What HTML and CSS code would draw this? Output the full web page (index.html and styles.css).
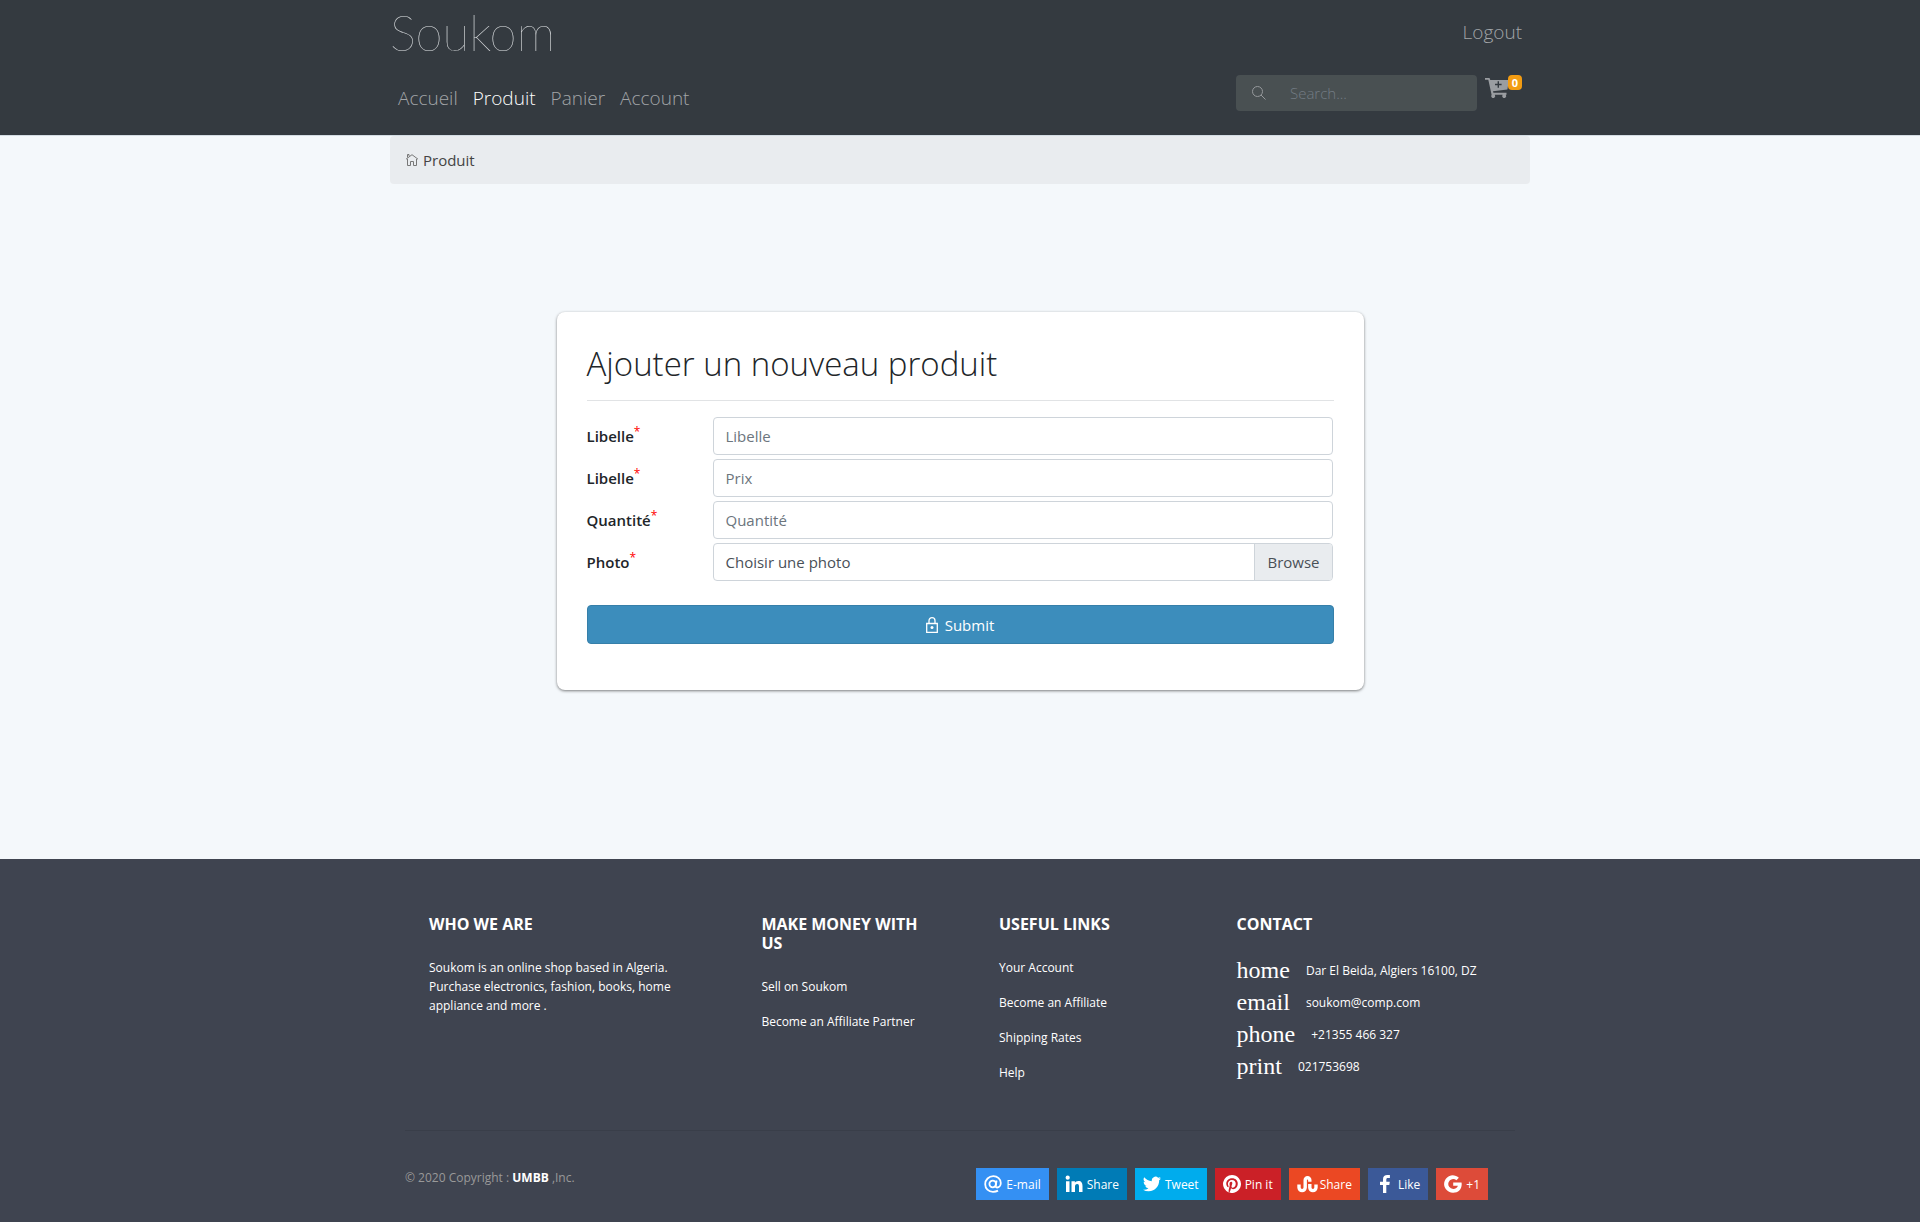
FILE: index.html
```html
<!DOCTYPE html>
<html lang="fr">
<head>
<meta charset="utf-8">
<meta name="viewport" content="width=device-width, initial-scale=1">
<title>Soukom - Produit</title>
<link rel="stylesheet" href="styles.css">
</head>
<body>
<header class="site-header">
  <div class="container">
    <div class="header-top">
      <a class="brand" href="#">Soukom</a>
      <a class="nav-link" href="#">Logout</a>
    </div>
    <div class="header-bottom">
      <nav class="main-nav">
        <a class="nav-link" href="#">Accueil</a>
        <a class="nav-link active" href="#">Produit</a>
        <a class="nav-link" href="#">Panier</a>
        <a class="nav-link" href="#">Account</a>
      </nav>
      <div class="header-tools">
        <form class="search">
          <svg class="search-icon" viewBox="0 0 14 14" aria-hidden="true"><circle cx="5.5" cy="5.5" r="5"/><path d="M9 9l4.500 4.500"/></svg>
          <input class="search-input" type="search" placeholder="Search..." aria-label="Search">
        </form>
        <a class="cart" href="#" aria-label="Panier">
          <svg class="cart-icon" viewBox="0 0 24 21" aria-hidden="true"><path fill-rule="evenodd" d="M0 0h4.500l.8 2H24l-1.600 9.500L8 13.200l.4 1.600H21.500v2H20.800a2 2 0 1 1-3.200 0H9.800a2 2 0 1 1-3.200 0L3.300 1.800H0zM12.600 3.200v2.600H10v1.400h2.600v2.600H14V7.200h2.600V5.800H14V3.200z"/></svg>
          <span class="badge">0</span>
        </a>
      </div>
    </div>
  </div>
</header>

<main class="container main">
  <nav class="breadcrumb" aria-label="Breadcrumb">
    <svg class="home-icon" viewBox="0 0 12 12" aria-hidden="true"><path d="M0 5.200L6 .7l6 4.500M1.500 5v6.500h3v-4h3v4h3V5M1.500 3.500v-3h1.500v1.500"/></svg>
    <span>Produit</span>
  </nav>

  <form class="card">
    <h1 class="card-title">Ajouter un nouveau produit</h1>
    <div class="fields">
      <label class="field-label" for="libelle">Libelle<sup class="required">*</sup></label>
      <input class="field" id="libelle" type="text" placeholder="Libelle">
      <label class="field-label" for="prix">Libelle<sup class="required">*</sup></label>
      <input class="field" id="prix" type="text" placeholder="Prix">
      <label class="field-label" for="quantite">Quantité<sup class="required">*</sup></label>
      <input class="field" id="quantite" type="text" placeholder="Quantité">
      <label class="field-label" for="photo">Photo<sup class="required">*</sup></label>
      <div class="file-field">
        <input class="file-input" id="photo" type="file">
        <span class="file-name">Choisir une photo</span>
        <span class="file-browse">Browse</span>
      </div>
    </div>
    <button class="submit" type="submit">
      <svg class="lock-icon" viewBox="0 0 12 16" aria-hidden="true"><path d="M.7 6.500h10.600v8.800H.7zM3 6.500V3.700a3 3 0 0 1 6 0v2.800"/><circle class="lock-dot" cx="6" cy="10.500" r="1.500"/></svg>
      Submit
    </button>
  </form>
</main>

<footer class="site-footer">
  <div class="container">
    <div class="footer-columns">
      <section>
        <h2 class="footer-title">WHO WE ARE</h2>
        <p class="footer-text">Soukom is an online shop based in Algeria. Purchase electronics, fashion, books, home appliance and more .</p>
      </section>
      <section>
        <h2 class="footer-title">MAKE MONEY WITH US</h2>
        <ul class="footer-links">
          <li><a href="#">Sell on Soukom</a></li>
          <li><a href="#">Become an Affiliate Partner</a></li>
        </ul>
      </section>
      <section>
        <h2 class="footer-title">USEFUL LINKS</h2>
        <ul class="footer-links">
          <li><a href="#">Your Account</a></li>
          <li><a href="#">Become an Affiliate</a></li>
          <li><a href="#">Shipping Rates</a></li>
          <li><a href="#">Help</a></li>
        </ul>
      </section>
      <section>
        <h2 class="footer-title">CONTACT</h2>
        <ul class="contact">
          <li><span class="contact-kind">home</span>Dar El Beida, Algiers 16100, DZ</li>
          <li><span class="contact-kind">email</span>soukom@comp.com</li>
          <li><span class="contact-kind">phone</span>+21355 466 327</li>
          <li><span class="contact-kind">print</span>021753698</li>
        </ul>
      </section>
    </div>
    <div class="footer-bottom">
      <p class="copyright">© 2020 Copyright : <a class="owner" href="#">UMBB</a> ,Inc.</p>
      <div class="shares">
        <a class="share email" href="#">
          <svg viewBox="0 0 18 18" aria-hidden="true"><g class="line"><circle cx="8.700" cy="9" r="3.300"/><path d="M12.600 5.500l-.9 5c-.2 1.500.6 2 1.500 2 1.800 0 3.600-1.800 3.600-4.500C16.800 4 13.500 1.200 9.300 1.200 4.800 1.200 1.200 4.700 1.200 9.200c0 4.400 3.300 7.600 7.800 7.600 2 0 3.600-.4 5-1.200"/></g></svg>E-mail</a>
        <a class="share linkedin" href="#">
          <svg viewBox="0 0 18 18" aria-hidden="true"><circle cx="2.700" cy="2.700" r="2.100"/><path d="M1 6.200h3.500V17H1zM6.500 6.200h3.400v1.500c.6-1 1.700-1.800 3.400-1.800 3.300 0 4.200 2.100 4.200 5V17H14v-5.400c0-1.500-.2-2.700-1.800-2.700-1.700 0-2.200 1.200-2.200 2.700V17H6.500z"/></svg>Share</a>
        <a class="share twitter" href="#">
          <svg viewBox="0 0 24 24" aria-hidden="true"><path d="M23.950 4.570a10 10 0 0 1-2.820.77 4.960 4.960 0 0 0 2.160-2.720c-.95.560-2 .960-3.130 1.190a4.920 4.920 0 0 0-8.380 4.480C7.690 8.090 4.070 6.130 1.640 3.160a4.920 4.920 0 0 0 1.520 6.570 4.900 4.900 0 0 1-2.230-.61v.06a4.920 4.920 0 0 0 3.950 4.830 5 5 0 0 1-2.210.08 4.940 4.940 0 0 0 4.600 3.420A9.870 9.870 0 0 1 0 19.540a14 14 0 0 0 7.550 2.210c9.050 0 14-7.500 14-13.980 0-.21 0-.42-.02-.63a9.940 9.940 0 0 0 2.420-2.570z"/></svg>Tweet</a>
        <a class="share pinterest" href="#">
          <svg viewBox="0 0 24 24" aria-hidden="true"><path d="M12 0a12 12 0 0 0-4.370 23.170c-.1-.95-.2-2.400.04-3.440l1.400-5.960s-.35-.72-.35-1.780c0-1.670.97-2.910 2.170-2.910 1.020 0 1.520.77 1.520 1.690 0 1.030-.66 2.570-1 4-.28 1.190.6 2.170 1.780 2.170 2.130 0 3.770-2.250 3.770-5.500 0-2.870-2.060-4.880-5.010-4.880-3.410 0-5.420 2.560-5.420 5.210 0 1.030.4 2.140.89 2.740.1.120.11.220.08.340l-.33 1.360c-.05.220-.17.270-.4.160-1.500-.7-2.430-2.890-2.430-4.650 0-3.780 2.750-7.260 7.930-7.260 4.160 0 7.400 2.970 7.400 6.930 0 4.140-2.610 7.460-6.230 7.460-1.220 0-2.360-.63-2.750-1.380l-.75 2.850c-.27 1.040-1 2.350-1.490 3.150A12 12 0 1 0 12 0z"/></svg>Pin it</a>
        <a class="share stumble" href="#">
          <svg class="wide" viewBox="0 0 21 18" aria-hidden="true"><path class="heavy" d="M2 9.500v3a3.100 3.100 0 0 0 6.200 0V5a2.300 2.300 0 0 1 4.600 0v1.800M12.800 9v3.500a3.100 3.100 0 0 0 6.200 0v-3"/></svg>Share</a>
        <a class="share facebook" href="#">
          <svg viewBox="0 0 18 18" aria-hidden="true"><path d="M7 18V10H4V6.700h3V4.200C7 1.400 8.700 0 11.300 0c1.200 0 2.300.1 2.600.1v3H12c-1.400 0-1.700.7-1.700 1.700v1.900h3.500L13.300 10h-3v8z"/></svg>Like</a>
        <a class="share google" href="#">
          <svg viewBox="0 0 18 18" aria-hidden="true"><path d="M9.200 7.400v3.300h4.700c-.5 2-2.200 3.200-4.700 3.200a4.900 4.900 0 1 1 3.200-8.600l2.500-2.500A8.700 8.700 0 1 0 9.200 17.700c5 0 8.500-3.500 8.500-8.500 0-.6 0-1.200-.2-1.800z"/></svg>+1</a>
      </div>
    </div>
  </div>
</footer>
</body>
</html>
```

FILE: styles.css
```css
*, *::before, *::after { box-sizing: border-box; }

body {
  margin: 0;
  min-height: 100vh;
  display: flex;
  flex-direction: column;
  background: #f4f8fb;
  color: #212529;
  font: 15px/24px "Open Sans", "Noto Sans", sans-serif;
}

a { color: inherit; text-decoration: none; }
ul { list-style: none; margin: 0; padding: 0; }
h1, h2, p { margin: 0; }

.container {
  width: 100%;
  max-width: 1140px;
  margin: 0 auto;
}

/* Header */
.site-header {
  background: #343a40;
  border-bottom: 1px solid #d3dce3;
  color: #a2a5a8;
  padding-bottom: 16px;
}

.header-top, .header-bottom {
  display: flex;
  justify-content: space-between;
  padding-right: 8px;
}

.header-top { height: 64px; align-items: center; }

.brand {
  font: 100 49px/64px Lato, "Open Sans", sans-serif;
  color: #dfe2e4;
}

.nav-link { font-size: 19px; line-height: 30px; font-weight: 300; }
.nav-link.active { color: #fff; }

.main-nav {
  display: flex;
  align-items: center;
  gap: 15px;
  height: 42px;
  padding-left: 8px;
}

.header-bottom { height: 55px; align-items: flex-end; }

.header-tools {
  display: flex;
  align-items: flex-start;
  gap: 8px;
  height: 44px;
}

.search {
  display: flex;
  align-items: center;
  width: 241px;
  height: 36px;
  padding-left: 16px;
  gap: 24px;
  background: #495052;
  border-radius: 4px;
}

.search-icon { width: 14px; height: 14px; fill: none; stroke: #96999c; }

.search-input {
  flex: 1;
  min-width: 0;
  padding: 0;
  border: 0;
  outline: 0;
  background: none;
  color: #fff;
  font: inherit;
  font-weight: 300;
}
.search-input::placeholder { color: #737c84; opacity: 1; }

.cart { display: flex; align-items: flex-start; }
.cart-icon { width: 24px; height: 21px; margin-top: 3px; margin-right: -1px; fill: #9a9da1; }

.badge {
  width: 14px;
  height: 15px;
  border-radius: 4px;
  background: #f39c12;
  color: #fff;
  font-size: 11px;
  font-weight: 700;
  line-height: 16px;
  text-align: center;
}

/* Main */
.main { flex: 1; }

.breadcrumb {
  display: flex;
  align-items: center;
  gap: 5px;
  height: 48px;
  padding: 0 16px;
  background: #e9ecef;
  border-radius: 4px;
  color: #444;
}
.home-icon { width: 12px; height: 12px; fill: none; stroke: #777; }

.card {
  max-width: 807px;
  margin: 128px auto 168px;
  padding: 30px 30px 46px;
  background: #fff;
  border-radius: 8px;
  box-shadow: 0 1px 3px rgba(0, 0, 0, .5);
}

.card-title {
  padding-bottom: 14px;
  border-bottom: 1px solid #e1e3e5;
  font-size: 33px;
  font-weight: 300;
  line-height: 44px;
}

.fields {
  display: grid;
  grid-template-columns: 126px 1fr;
  gap: 4px 0;
  margin: 16px 1px 24px 0;
}

.field-label { font-weight: 600; line-height: 38px; }
.required { color: red; font-size: 12px; font-weight: 400; line-height: 0; }

.field, .file-field {
  height: 38px;
  width: 100%;
  border: 1px solid #ced4da;
  border-radius: 4px;
  background: #fff;
  color: #495057;
}
.field { padding: 0 12px; font: inherit; }
.field::placeholder { color: #6c757d; opacity: 1; }

.file-field {
  position: relative;
  display: flex;
  line-height: 36px;
  overflow: hidden;
}
.file-input {
  position: absolute;
  inset: 0;
  width: 100%;
  opacity: 0;
}
.file-name { flex: 1; padding-left: 12px; }
.file-browse {
  padding: 0 12px;
  border-left: 1px solid #ced4da;
  background: #e9ecef;
}

.submit {
  display: flex;
  align-items: center;
  justify-content: center;
  gap: 7px;
  width: 100%;
  height: 39px;
  border: 1px solid #367fa9;
  border-radius: 4px;
  background: #3c8dbc;
  color: #fff;
  font: inherit;
}
.lock-icon { width: 12px; height: 16px; fill: none; stroke: #fff; stroke-width: 1.3; }
.lock-dot { fill: #fff; stroke: none; }

/* Footer */
.site-footer {
  background: #3f4450;
  color: #fff;
  font-size: 12px;
  line-height: 19px;
  padding: 56px 0 22px;
}

.footer-columns {
  display: grid;
  grid-template-columns: 3fr 2fr 2fr 3fr;
  gap: 48px;
  padding: 0 24px;
}
.footer-columns > section { padding: 0 15px; }

.footer-title {
  margin-bottom: 24px;
  font-size: 16px;
  font-weight: 700;
  line-height: 19px;
}

.footer-links li { margin-bottom: 16px; }

.contact li { display: flex; align-items: center; height: 32px; }
.contact { margin-top: -4px; }
.contact-kind {
  margin-right: 16px;
  font: 24px/32px "Liberation Serif", serif;
}

.footer-bottom {
  display: flex;
  justify-content: space-between;
  margin: 32px 15px 0;
  padding: 37px 27px 0 0;
  border-top: 1px solid #393e49;
}

.copyright { color: #999; }
.owner { color: #fff; font-weight: 700; }

.shares { display: flex; gap: 8px; }

.share {
  display: flex;
  align-items: center;
  gap: 4px;
  height: 32px;
  padding: 0 8px;
}
.share svg { width: 18px; height: 18px; fill: #fff; }
.share .wide { width: 21px; }
.share .line { fill: none; stroke: #fff; stroke-width: 1.8; }
.share .heavy { fill: none; stroke: #fff; stroke-width: 3.4; }

.email { background: #3490f3; }
.linkedin { background: #007bb6; }
.twitter { background: #00aced; }
.pinterest { background: #cb2027; }
.stumble { background: #eb4823; gap: 2px; }
.facebook { background: #3b5998; }
.google { background: #dd4b39; }
```
